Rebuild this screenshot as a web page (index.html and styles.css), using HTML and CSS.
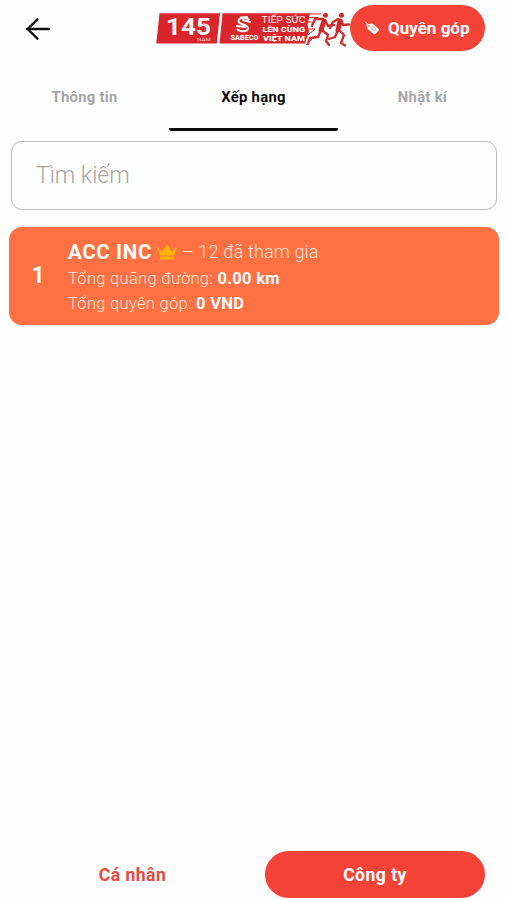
FILE: index.html
```html
<!DOCTYPE html>
<html lang="vi">
<head>
<meta charset="utf-8">
<meta name="viewport" content="width=device-width, initial-scale=1">
<title>Xếp hạng</title>
<link rel="stylesheet" href="styles.css">
</head>
<body>
<div class="app">
  <header class="header">
    <button class="back" aria-label="Quay lại">
      <svg width="26" height="24" viewBox="0 0 26 24"><path d="M24 12H2M12.500 2.300L2.500 12l10 9.700" fill="none" stroke="#111" stroke-width="2.300" stroke-linecap="round" stroke-linejoin="round"/></svg>
    </button>
    <svg class="logo" width="194" height="38" viewBox="156 10 194 38">
      <path d="M159.500 13.300H220L216.800 43.600H156.300ZM222.500 13.300H310L307.500 25L309 31L305 43.600H219.500Z" fill="#d9262d"/>
      <g fill="#fff" font-family="Roboto, sans-serif">
        <text class="brand-number" x="166" y="34.500" font-size="24" textLength="45" lengthAdjust="spacingAndGlyphs">145</text>
        <text x="197" y="40.500" font-size="4" textLength="14" lengthAdjust="spacingAndGlyphs" opacity=".8">NĂM</text>
        <text x="230.500" y="40" font-size="7.500" font-weight="900" textLength="28" lengthAdjust="spacingAndGlyphs">SABECO</text>
        <text x="261.500" y="23.300" font-size="8.800" textLength="44" lengthAdjust="spacingAndGlyphs" opacity=".9">TIẾP SỨC</text>
        <text x="262.500" y="32" font-size="7.800" font-weight="900" textLength="42.500" lengthAdjust="spacingAndGlyphs">LÊN CÙNG</text>
        <text x="263" y="40.500" font-size="7.800" font-weight="900" textLength="42" lengthAdjust="spacingAndGlyphs">VIỆT NAM</text>
      </g>
      <path d="M168 20l7 3m-4 4l5-2m-4 6l5-3m6 1l9-9m-5 10l7-8m-10 8h12m5-11l9 2m-9 3l10 2m-3 4l-8 2" stroke="#d9262d" stroke-width=".6" opacity=".35"/>
      <path d="M249 19.500C246 17 239 17 238.500 21C238 25 248 24 248 28C248 32 240 32 237.500 29.500M250 22L243 20M237 26L245 27M241 17.500L247 17" fill="none" stroke="#fff" stroke-width="1.900" stroke-linecap="round"/>
      <g fill="none" stroke="#ce2b2e" stroke-linecap="round" stroke-linejoin="round">
        <path d="M309 14H321M309 17.500H318M308 22H312M308 29H315L308 35M306 45L315 36" stroke-width="1"/>
        <path d="M324 21L321 30" stroke-width="5"/>
        <path d="M323 19L315 19L312 26M325 20L328 26L334 25M321 30L318 37L310 38L308 44M322 30L328 35L326 41L329 45" stroke-width="2.300"/>
        <path d="M340 21L338 30" stroke-width="5"/>
        <path d="M338 19L333 22L330 28M341 20L343 25L349 24.500M338 30L335 37L329 39M339 30L344 35L341 43L345 45.500" stroke-width="2.300"/>
      </g>
      <circle cx="325.500" cy="15.200" r="2.500" fill="#ce2b2e"/><circle cx="341.500" cy="15.200" r="2.500" fill="#ce2b2e"/>
    </svg>
    <button class="donate">
      <svg width="16" height="16" viewBox="0 0 16 16"><path d="M2.300 4.500L8.500 3.500L14.700 9Q15.400 9.800 14.700 10.600L11.300 14Q10.500 14.700 9.700 14L3.500 9Z" fill="#fff"/><path d="M1 1.500L4.500 5" stroke="#fff" stroke-width="1" fill="none"/><circle cx="4.800" cy="6" r=".8" fill="#f44336"/><path d="M7 8.200L9 6.500L12 9.200L10 11ZM8.700 8.300L10.300 9.500" fill="none" stroke="#f44336" stroke-width=".45"/></svg>
      <span>Quyên góp</span>
    </button>
  </header>
  <nav class="tabs">
    <a class="tab">Thông tin</a>
    <a class="tab active">Xếp hạng</a>
    <a class="tab">Nhật kí</a>
  </nav>
  <main class="main">
    <div class="search"><span>Tìm kiếm</span></div>
    <article class="rank-card">
      <div class="rank">1</div>
      <div class="details">
        <div class="company"><strong>ACC INC</strong>
          <svg width="20" height="16" viewBox="0 0 20 16"><path d="M2.800 11.500L1 5L5.400 7.200L10 1L14.600 7.200L19 5L17.200 11.500ZM3 12.500H17V15.500H3Z" fill="#ffb300"/><circle cx="1.300" cy="4.700" r="1.100" fill="#ffb300"/><circle cx="10" cy="1.600" r="1.200" fill="#ffb300"/><circle cx="18.700" cy="4.700" r="1.100" fill="#ffb300"/></svg>
          <span>– 12 đã tham gia</span></div>
        <div class="stat">Tổng quãng đường: <b>0.00 km</b></div>
        <div class="stat">Tổng quyên góp: <b>0 VND</b></div>
      </div>
    </article>
  </main>
  <footer class="switch">
    <button class="choice">Cá nhân</button>
    <button class="choice selected">Công ty</button>
  </footer>
</div>
</body>
</html>
```
FILE: styles.css
```css
* { box-sizing: border-box; }
body { margin: 0; background: #fefefe; font-family: Roboto, sans-serif; }
button { border: 0; padding: 0; background: none; font-family: inherit; }
.app { width: 507px; height: 900px; display: flex; flex-direction: column; overflow: hidden; }
.header { height: 62px; padding: 5px 22px 0 25px; display: flex; align-items: flex-start; }
.back { width: 26px; height: 24px; margin: 12px 105px 0 0; }
.back svg, .logo, .donate svg { display: block; flex: none; }
.logo { margin-top: 5px; }
.brand-number { font-weight: 700; }
.donate { width: 135px; height: 46px; flex: none; border-radius: 23px; background: #f44336; color: #fff; display: flex; align-items: center; padding: 0 0 0 14px; gap: 8px; font-size: 17px; font-weight: 700; white-space: nowrap; }
.tabs { height: 69px; display: grid; grid-template-columns: repeat(3, 1fr); }
.tab { display: flex; align-items: center; justify-content: center; border-bottom: 3px solid transparent; color: #a5a5a5; font-size: 14.8px; letter-spacing: .3px; font-weight: 700; padding-top: 4px; }
.active { color: #0b0b0b; border-color: #0b0b0b; border-radius: 2px; }
.main { flex: 1; padding: 10px 8px 0 9px; }
.search { height: 69px; margin: 0 2px; border: 1.5px solid #bcbcbc; border-radius: 11px; padding: 0 0 0 24px; display: flex; align-items: center; color: #a5a5a5; font-size: 23px; font-weight: 300; }
.rank-card { height: 98px; margin-top: 17px; border-radius: 13px; background: #ff7043; color: #fff; display: flex; }
.rank { width: 59px; padding-right: 1px; font-size: 23px; font-weight: 700; text-align: center; line-height: 98px; }
.details { padding-top: 10px; white-space: nowrap; }
.company { height: 29px; display: flex; align-items: center; font-size: 18px; letter-spacing: .15px; font-weight: 300; color: #ffe6dd; }
.company strong { color: #fff; font-size: 20.5px; letter-spacing: .65px; font-weight: 700; }
.company svg { margin: 0 5px 0 5px; }
.stat { height: 25px; line-height: 25px; font-size: 16.5px; letter-spacing: .3px; font-weight: 300; color: #ffe6dd; }
.stat b { color: #fff; font-weight: 700; }
.switch { height: 49px; padding: 0 22px 2px 0; display: flex; }
.choice { width: 265px; height: 47px; border-radius: 24px; color: #e54b41; font-size: 17.5px; letter-spacing: .5px; font-weight: 700; }
.selected { width: 220px; background: #f44336; color: #fff; }
```
